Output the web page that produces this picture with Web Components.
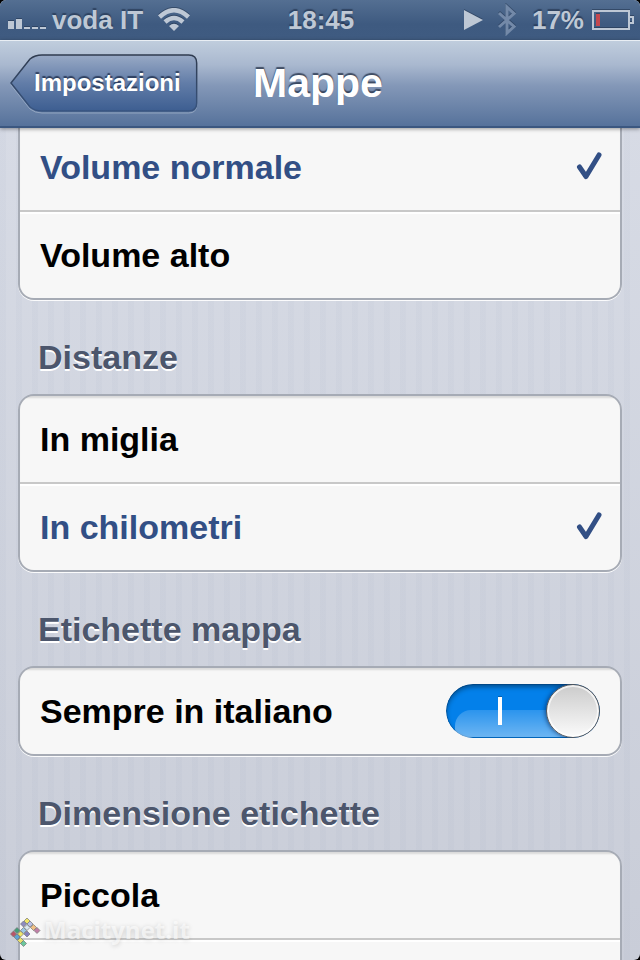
<!DOCTYPE html>
<html lang="it">
<head>
<meta charset="utf-8">
<meta name="viewport" content="width=device-width, initial-scale=1">
<title>Mappe</title>
<style>
  :root {
    --color-accent: #324f85;
    --color-border: #a6abb5;
    --color-divider: #c8c8c8;
    --color-cell: #f7f7f7;
    --color-header: #4c566c;
    --color-status: #bec8d5;
  }

  body {
    margin: 0;
    background: #000;
    font-family: 'Liberation Sans', Arial, sans-serif;
    font-weight: 700;
  }
</style>
</head>
<body>

<settings-screen>
  <status-bar slot="bar" carrier="voda IT" time="18:45" battery="17%"></status-bar>
  <nav-bar slot="bar" back="Impostazioni">Mappe</nav-bar>

  <settings-group continued>
    <choice-row checked>Volume normale</choice-row>
    <choice-row>Volume alto</choice-row>
  </settings-group>
  <settings-group heading="Distanze">
    <choice-row>In miglia</choice-row>
    <choice-row checked>In chilometri</choice-row>
  </settings-group>
  <settings-group heading="Etichette mappa">
    <switch-row checked>Sempre in italiano</switch-row>
  </settings-group>
  <settings-group heading="Dimensione etichette">
    <choice-row>Piccola</choice-row>
    <choice-row></choice-row>
  </settings-group>

  <site-mark slot="mark">Macitynet.it</site-mark>
</settings-screen>

<script>
class SettingsScreen extends HTMLElement {
  constructor() {
    super();
    this.attachShadow({ mode: 'open' }).innerHTML = `
      <style>
        :host {
          display: flex;
          flex-direction: column;
          position: relative;
          height: 100vh;
          overflow: hidden;
          border-radius: 6px;
          background:
            repeating-linear-gradient(90deg, rgba(90, 110, 150, 0.03) 0 6px, transparent 6px 16px),
            linear-gradient(#d9dde7, #c9cdd8);
        }
        main {
          flex: 1;
          min-height: 0;
          overflow: hidden;
          padding: 0 18px;
        }
      </style>
      <slot name="bar"></slot>
      <main><slot></slot></main>
      <slot name="mark"></slot>
    `;
  }
}

class StatusBar extends HTMLElement {
  connectedCallback() {
    this.attachShadow({ mode: 'open' }).innerHTML = `
      <style>
        :host {
          display: grid;
          grid-template-columns: 1fr auto 1fr;
          align-items: center;
          box-sizing: border-box;
          height: 40px;
          padding: 0 6px 0 8px;
          background: linear-gradient(#546f92, #3e5a80 60%, #3f5b81);
          color: var(--color-status);
          font-size: 26px;
          line-height: 40px;
          text-shadow: 0 -2px 1px rgba(30, 45, 70, 0.6);
        }
        .side {
          display: flex;
          align-items: center;
          gap: 6px;
        }
        .end {
          justify-content: flex-end;
          gap: 8px;
        }
        svg {
          display: block;
          flex: none;
          fill: currentColor;
          filter: drop-shadow(0 -1px 0 rgba(30, 45, 70, 0.5));
        }
        .wifi { margin-left: 8px; }
        .bluetooth { margin: 0 8px 0 7px; color: #7389a8; }
      </style>
      <div class="side">
        <svg width="38" height="18" viewBox="0 0 38 18" aria-hidden="true">
          <path d="M0 10h6v8H0zM8 8h6v10H8zM16 16h6v2h-6zM24 16h6v2h-6zM32 16h6v2h-6z"/>
        </svg>
        <span>${this.getAttribute('carrier')}</span>
        <svg class="wifi" width="34" height="24" viewBox="0 0 34 24" aria-hidden="true">
          <path d="M17 23l-5-5Q17 13.500 22 18z"/>
          <path d="M8 14Q17 6 26 14M2.500 9Q17-4.500 31.500 9" fill="none" stroke="currentColor" stroke-width="4.500"/>
        </svg>
      </div>
      <time>${this.getAttribute('time')}</time>
      <div class="side end">
        <svg width="19" height="22" viewBox="0 0 19 22" aria-hidden="true"><path d="M0 1l19 10L0 21z"/></svg>
        <svg class="bluetooth" width="18" height="32" viewBox="0 0 18 32" aria-hidden="true">
          <path d="M1 9l15 13.500-7 6.500V3l7 6.500L1 23" fill="none" stroke="currentColor" stroke-width="3"/>
        </svg>
        <span>${this.getAttribute('battery')}</span>
        <svg width="42" height="20" viewBox="0 0 42 20" aria-hidden="true">
          <path d="M1 1h36v18H1zM38 7h3v6h-3" fill="none" stroke="currentColor" stroke-width="2"/>
          <path d="M4 4h4v12H4z" fill="#c4484f"/>
        </svg>
      </div>
    `;
  }
}

class NavBar extends HTMLElement {
  connectedCallback() {
    this.attachShadow({ mode: 'open' }).innerHTML = `
      <style>
        :host {
          display: grid;
          grid-template-columns: 1fr auto 1fr;
          align-items: center;
          box-sizing: border-box;
          height: 88px;
          padding: 0 14px 2px 10px;
          border-top: 1px solid #e9eef4;
          border-bottom: 2px solid #3b5780;
          background: linear-gradient(#c0cddd, #a9b8cf 28%, #8498b8 52%, #56729b);
          box-shadow: 0 1px 4px rgba(0, 0, 0, 0.4);
          z-index: 1;
          color: #fff;
        }
        button {
          position: relative;
          justify-self: start;
          height: 58px;
          padding: 0 17px 0 24px;
          border: 0;
          background: none;
          color: inherit;
          font: inherit;
          font-size: 24px;
          line-height: 58px;
          text-shadow: 0 -2px 1px rgba(30, 45, 75, 0.8);
        }
        svg {
          position: absolute;
          inset: 0;
          width: 100%;
          height: 100%;
          overflow: visible;
        }
        span { position: relative; }
        h1 {
          margin: 0;
          font-size: 41px;
          line-height: 48px;
          text-shadow: 0 -2px 1px rgba(40, 52, 75, 0.8);
        }
      </style>
      <button type="button">
        <svg viewBox="0 0 188 58" preserveAspectRatio="none" aria-hidden="true">
          <defs>
            <linearGradient id="fill" x1="0" y1="0" x2="0" y2="1">
              <stop offset="0" stop-color="#98a9c5"/>
              <stop offset="0.5" stop-color="#627da8"/>
              <stop offset="1" stop-color="#3d5e91"/>
            </linearGradient>
            <linearGradient id="edge" x1="0" y1="0" x2="0" y2="1">
              <stop offset="0" stop-color="#2f3b4f"/>
              <stop offset="1" stop-color="#38547f"/>
            </linearGradient>
          </defs>
          <path d="M1 31L20 7q5-4 12-4h147q8 0 8 8v40q0 8-8 8H32q-7 0-12-4z" fill="none" stroke="#a5b5cc" stroke-opacity="0.700"/>
          <path d="M1 29L20 5q5-4 12-4h147q8 0 8 8v40q0 8-8 8H32q-7 0-12-4z" fill="url(#fill)" stroke="url(#edge)" stroke-width="1.500"/>
        </svg>
        <span>${this.getAttribute('back')}</span>
      </button>
      <h1><slot></slot></h1>
    `;
  }
}

class SettingsGroup extends HTMLElement {
  connectedCallback() {
    const heading = this.getAttribute('heading');
    this.attachShadow({ mode: 'open' }).innerHTML = `
      <style>
        :host { display: block; }
        h2 {
          margin: 0;
          padding: 35px 20px 15px;
          color: var(--color-header);
          font-size: 34px;
          line-height: 44px;
          text-shadow: 0 2px 0 #fff;
        }
        .cells {
          display: flex;
          flex-direction: column;
          gap: 2px;
          border: 2px solid var(--color-border);
          border-radius: 16px;
          background: var(--color-divider);
          box-shadow: 0 1px 0 rgba(255, 255, 255, 0.9);
          overflow: hidden;
        }
        ::slotted(:first-child) {
          box-shadow: inset 0 3px 2px -1px rgba(0, 0, 0, 0.12);
        }
        /* the rest of this group is scrolled under the nav bar */
        :host([continued]) .cells {
          margin-top: -4px;
          border-top: 0;
          border-radius: 0 0 16px 16px;
        }
      </style>
      ${heading ? `<h2>${heading}</h2>` : ''}
      <div class="cells" role="group"><slot></slot></div>
    `;

    // radios live in separate shadow roots, so keep the choice exclusive here
    this.addEventListener('choose', (e) => {
      this.querySelectorAll('choice-row').forEach(row => {
        if (row !== e.target) row.input.checked = false;
      });
    });
  }
}

const ROW_CSS = `
  :host {
    display: block;
    background: var(--color-cell);
    box-shadow: inset 0 2px 0 #fff;
    color: #000;
  }
  label {
    display: flex;
    align-items: center;
    justify-content: space-between;
    box-sizing: border-box;
    height: 86px;
    padding: 0 20px;
    font-size: 34px;
    line-height: 44px;
  }
  input {
    appearance: none;
    margin: 0;
  }
`;

class ChoiceRow extends HTMLElement {
  connectedCallback() {
    this.attachShadow({ mode: 'open' }).innerHTML = `
      <style>
        ${ROW_CSS}
        input { position: absolute; }
        label:has(:checked) { color: var(--color-accent); }
        svg {
          visibility: hidden;
          margin-bottom: 4px;
          overflow: visible;
        }
        :checked ~ svg { visibility: visible; }
      </style>
      <label>
        <span><slot></slot></span>
        <input type="radio" ${this.hasAttribute('checked') ? 'checked' : ''}>
        <svg width="26" height="28" viewBox="0 0 26 28" aria-hidden="true">
          <path d="M5.500 16L12 25.500 25 4" fill="none" stroke="currentColor" stroke-width="5" stroke-linecap="round" stroke-linejoin="round"/>
        </svg>
      </label>
    `;
    this.input = this.shadowRoot.querySelector('input');
    this.input.addEventListener('change', () => {
      this.dispatchEvent(new CustomEvent('choose', { bubbles: true }));
    });
  }
}

class SwitchRow extends HTMLElement {
  connectedCallback() {
    this.attachShadow({ mode: 'open' }).innerHTML = `
      <style>
        ${ROW_CSS}
        .switch {
          display: grid;
          width: 154px;
          height: 54px;
          border-radius: 27px;
          overflow: hidden;
        }
        .switch > * { grid-area: 1 / 1; }
        input {
          border-radius: 27px;
          background: #ddd;
          box-shadow: inset 0 0 0 1px rgba(0, 30, 70, 0.25), inset 0 3px 5px rgba(0, 0, 0, 0.4);
        }
        input:checked { background: #0380ea; }
        .gloss {
          align-self: end;
          height: 27px;
          margin: 0 27px 1px 9px;
          border-radius: 16px 0 0 8px;
          background: linear-gradient(rgba(255, 255, 255, 0.16), rgba(255, 255, 255, 0.42));
          pointer-events: none;
        }
        .bar {
          place-self: center start;
          width: 4px;
          height: 28px;
          margin-left: 52px;
          background: #fff;
          box-shadow: 0 -1px 0 #0560ad;
          pointer-events: none;
        }
        .knob {
          justify-self: end;
          box-sizing: border-box;
          width: 54px;
          height: 54px;
          border: 1px solid #55575b;
          border-radius: 50%;
          background: linear-gradient(#cbcbcb, #fbfbfb);
          box-shadow: inset 0 0 0 2px rgba(255, 255, 255, 0.7), -1px 0 4px rgba(0, 30, 80, 0.6);
          pointer-events: none;
        }
        input:not(:checked) ~ .knob { justify-self: start; }
        input:not(:checked) ~ .bar,
        input:not(:checked) ~ .gloss { visibility: hidden; }
      </style>
      <label>
        <span><slot></slot></span>
        <span class="switch">
          <input type="checkbox" role="switch" ${this.hasAttribute('checked') ? 'checked' : ''}>
          <span class="gloss"></span>
          <span class="bar"></span>
          <span class="knob"></span>
        </span>
      </label>
    `;
  }
}

class SiteMark extends HTMLElement {
  connectedCallback() {
    // x, y, colour of each tile in the logo
    const tiles = [
      [17, 7, '#f0e668'], [13.5, 10, '#8d8bc0'], [20, 10, '#b9c0e6'], [17, 13.5, '#d9e6ef'], [23.5, 13.5, '#f0bf85'],
      [27, 16.5, '#c07ea6'], [7, 16.5, '#459e78'], [13.5, 16.5, '#9cc8e4'], [3.5, 20, '#b95468'], [10.5, 20, '#f0e668'],
      [17, 20, '#8581bd'], [7, 23, '#5ea4d4'], [10.5, 26.5, '#e8e06e'], [13.5, 29.500, '#6cc79c']
    ].map(([x, y, fill]) => `<path d="M${x} ${y - 3}l3 3-3 3-3-3z" fill="${fill}"/>`).join('');

    this.attachShadow({ mode: 'open' }).innerHTML = `
      <style>
        :host {
          position: absolute;
          left: 10px;
          bottom: 14px;
          display: flex;
          align-items: center;
          gap: 2px;
          color: rgba(255, 255, 255, 0.6);
          font-family: 'Open Sans', sans-serif;
          font-size: 24px;
          line-height: 32px;
          text-shadow: 0 1px 5px rgba(0, 0, 0, 0.18);
          pointer-events: none;
        }
      </style>
      <svg width="32" height="32" viewBox="0 0 32 32" overflow="visible" stroke="#777" stroke-width="0.700" aria-hidden="true">${tiles}</svg>
      <span><slot></slot></span>
    `;
  }
}

customElements.define('settings-screen', SettingsScreen);
customElements.define('status-bar', StatusBar);
customElements.define('nav-bar', NavBar);
customElements.define('settings-group', SettingsGroup);
customElements.define('choice-row', ChoiceRow);
customElements.define('switch-row', SwitchRow);
customElements.define('site-mark', SiteMark);
</script>
</body>
</html>
